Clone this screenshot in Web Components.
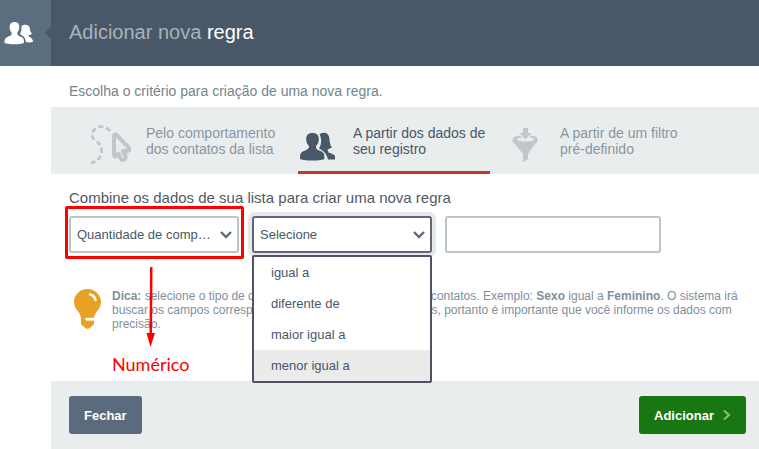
<!DOCTYPE html>
<html lang="pt-BR">
<head>
<meta charset="utf-8">
<title>Adicionar nova regra</title>
<style>
body { margin: 0; background: #fff; font-family: "Liberation Sans", Arial, sans-serif; color: #485868; }
</style>
</head>
<body>
<rule-dialog></rule-dialog>

<template id="t-dialog">
<style>
:host { display: flex; flex-direction: column; min-height: 100vh; }
.content { flex: 1; margin-left: 51px; display: flex; flex-direction: column; }
.intro { margin: 0; padding: 16px 18px 7px; font-size: 14px; line-height: 18px; color: #75848a; }
nav { display: flex; gap: 15px; padding-left: 40px; background: #e9edee; }
.grow { flex: 1; }
strong { color: #80909c; }
</style>
<page-header>Adicionar nova <b slot="em">regra</b></page-header>
<div class="content">
  <p class="intro">Escolha o critério para criação de uma nova regra.</p>
  <nav>
    <criteria-tab icon="path">Pelo comportamento<br>dos contatos da lista</criteria-tab>
    <criteria-tab icon="people" active>A partir dos dados de<br>seu registro</criteria-tab>
    <criteria-tab icon="funnel">A partir de um filtro<br>pré-definido</criteria-tab>
  </nav>
  <rule-form></rule-form>
  <tip-box><strong>Dica:</strong> selecione o tipo de dado desejado para agrupar seus contatos. Exemplo: <strong>Sexo</strong> igual a <strong>Feminino</strong>. O sistema irá buscar os campos correspondentes nos cadastros existentes, portanto é importante que você informe os dados com precisão.</tip-box>
  <div class="grow"></div>
  <action-bar></action-bar>
</div>
</template>

<template id="t-header">
<style>
:host { display: flex; height: 66px; background: #485868; }
.side { position: relative; width: 51px; background: #5b6e7f; display: flex; align-items: center; }
.side svg { margin-left: 4px; }
.notch { position: absolute; right: 0; top: 27px; border: 6px solid transparent; border-left-width: 0; border-right-color: #485868; }
h1 { margin: 0; padding-left: 18px; font-size: 20px; font-weight: 400; line-height: 64px; color: #a9b2b8; }
::slotted(b) { font-weight: 400; color: #fff; }
</style>
<div class="side">
  <svg width="30" height="24" viewBox="0 0 30 24" fill="#fff" aria-hidden="true">
    <path d="M10.500 1C14 1 15.600 3.400 15.300 6.500C15.100 9 14.200 10.500 13.300 11.500C13 14.500 15 15 17.500 16C19.500 17 20 18.500 20 22C15 23.800 6 23.800 .5 22C.5 18 1 17 4 15.700C6.500 14.700 8 14.500 7.600 11.500C6.500 10.500 5.800 9 5.700 6.500C5.400 3.400 7 1 10.500 1Z"/>
    <path d="M17.500 5C21 2.600 25.800 4.200 26 8C26 10.500 27 11.500 28 12.800C27 14 25 14 24.300 14.300C24.300 16 29 16.500 29 21C26.500 21.500 24 21.500 21.800 21C21.500 16 19 15 16 13.300C16.800 11 17.900 8 17.500 5Z"/>
  </svg>
  <span class="notch"></span>
</div>
<h1><slot></slot><slot name="em"></slot></h1>
</template>

<template id="t-tab">
<style>
:host { display: block; width: 192px; }
a { display: flex; box-sizing: border-box; height: 67px; padding-top: 18px; text-decoration: none; color: #8996a1; font-size: 14px; line-height: 16px; border-bottom: 3px solid transparent; }
:host([active]) a { color: #485868; border-bottom-color: #c53822; }
.icon { width: 55px; flex: none; color: #bfc6cc; }
:host([active]) .icon { color: #485868; }
svg { display: block; }
span { white-space: nowrap; }
</style>
<a href="#"><div class="icon"></div><span><slot></slot></span></a>
</template>

<template id="t-form">
<style>
:host { display: block; padding: 14px 18px 0; }
h2 { margin: 0 0 8px; font-size: 15px; line-height: 20px; font-weight: 400; color: #505a66; }
.row { display: flex; gap: 13px; }
.f1 { position: relative; width: 170px; }
.f2 { position: relative; width: 180px; }
.f3 { flex: 0 1 216px; min-width: 60px; }
select, input { box-sizing: border-box; display: block; width: 100%; height: 37px; border: 2px solid #bcc4ca; border-radius: 3px; background: #fff; font: 13px "Liberation Sans", Arial, sans-serif; color: #485868; outline: none; margin: 0; padding: 0 6px; appearance: none; }
.f2 select { border-color: #666475; box-shadow: 0 0 0 4px #e4e8ef; }
.chev { position: absolute; right: 7px; top: 14px; pointer-events: none; }
ul { position: absolute; z-index: 2; box-sizing: border-box; top: 39px; left: 0; width: 100%; margin: 0; padding: 0; list-style: none; background: #fff; border: 2px solid #535061; border-radius: 2px; font-size: 13px; line-height: 31px; color: #485868; }
li { padding-left: 17px; }
li[aria-selected="true"] { background: #ebebeb; }
.mark { position: absolute; z-index: 1; left: -4px; top: -10px; right: -5px; bottom: -6px; border: 3px solid #fe0000; border-radius: 2px; pointer-events: none; }
.arrow { position: absolute; z-index: 1; left: 77px; top: 51px; pointer-events: none; }
.note { position: absolute; z-index: 1; left: 43px; top: 136px; font: 18px/24px Lato, "Open Sans", sans-serif; color: #fe0000; }
</style>
<h2>Combine os dados de sua lista para criar uma nova regra</h2>
<div class="row">
  <div class="f1">
    <select aria-label="Campo"><option>Quantidade de comp…</option></select>
    <svg class="chev" width="12" height="10" viewBox="0 0 12 10" fill="none" stroke="#5b6b80" stroke-width="2.400" aria-hidden="true"><path d="M1 2L6 7L11 2"/></svg>
    <div class="mark"></div>
    <svg class="arrow" width="10" height="80" viewBox="0 0 10 80" fill="#fe0000" aria-hidden="true"><path d="M4 0H6.500L6 66H9L4.500 80L.5 66H3.500Z"/></svg>
    <div class="note">Numérico</div>
  </div>
  <div class="f2">
    <select aria-label="Operador"><option>Selecione</option></select>
    <svg class="chev" width="12" height="10" viewBox="0 0 12 10" fill="none" stroke="#5b6b80" stroke-width="2.400" aria-hidden="true"><path d="M1 2L6 7L11 2"/></svg>
    <ul role="listbox" aria-label="Operador">
      <li role="option">igual a</li>
      <li role="option">diferente de</li>
      <li role="option">maior igual a</li>
      <li role="option" aria-selected="true">menor igual a</li>
    </ul>
  </div>
  <div class="f3"><input type="text" aria-label="Valor"></div>
</div>
</template>

<template id="t-tip">
<style>
:host { display: flex; gap: 11px; padding: 36px 16px 0 23px; font-size: 12px; line-height: 14px; color: #80909c; }
svg { flex: none; }
p { margin: 0; }
</style>
<svg width="27" height="40" viewBox="0 0 27 40" aria-hidden="true">
  <path fill="#e8a025" d="M13.500 0C21 0 27 5.600 27 13C27 17.500 25 20 22.500 23C21 25 20.500 27 20 29H7C6.500 27 6 25 4.500 23C2 20 0 17.500 0 13C0 5.600 6 0 13.500 0ZM7 28H12V31.500H20V34.500Q20 36 18 37Q15.500 40 13.500 40Q11.500 40 9 37Q7 36 7 34.500Z"/>
  <path fill="none" stroke="#fff" stroke-width="2.600" stroke-linecap="round" d="M16 5.500Q20.500 6.500 21.500 11M12.500 30H20"/>
</svg>
<p><slot></slot></p>
</template>

<template id="t-bar">
<style>
:host { display: flex; justify-content: space-between; padding: 15px 13px 15px 18px; background: #e9edee; }
button { height: 38px; border: 0; border-radius: 3px; padding: 0 15px; font: bold 13px "Liberation Sans", Arial, sans-serif; color: #fff; background: #5b6a7c; display: flex; align-items: center; gap: 9px; }
.ok { background: #187713; }
</style>
<button type="button">Fechar</button>
<button type="button" class="ok">Adicionar<svg width="8" height="12" viewBox="0 0 8 12" fill="none" stroke="#8cbb89" stroke-width="2" aria-hidden="true"><path d="M1 1.500L6 6L1 10.500"/></svg></button>
</template>

<script>
const icons = {
  path: `<svg width="40" height="40" viewBox="0 0 40 40" fill="none" stroke="currentColor" aria-hidden="true">
    <path stroke-width="2.800" stroke-dasharray="5 3" d="M19 6C15 1 8 0 4 4C0 8 0 12 4 15C8 18 11 21 10.500 27C10 33 6 37 0 38"/>
    <path stroke-width="4" stroke-linejoin="round" d="M23 11Q23 8 25.500 10L38 23Q39.500 26 36 26H32L34.500 31Q35 35 32 35Q30 35.500 29 32L27.500 28.500L25.500 31Q23 33 23 29.500Z"/></svg>`,
  people: `<svg width="37" height="40" viewBox="0 0 37 40" fill="currentColor" aria-hidden="true">
    <path d="M14.500 8C19 8 21 10.500 20.800 14.500C20.700 18 19.500 19.500 18 21C18 24.500 19 24.500 22.500 26C26 27.500 26.500 29 26.500 34C21 36 8 36 2 34C2 29 2.500 27.500 6 26C9.500 24.500 11 24 11 21C9.500 19.500 8.300 18 8.200 14.500C8 10.500 10 8 14.500 8Z"/>
    <path d="M21.500 9Q29 5.500 31 11.500C32 16 31.500 19.500 34 22.500L29.500 24.500L30.500 27.500Q36 29 37 31V34.500H30C28.500 29 26.500 26.500 21 23.500C23.500 20 24 14 21.500 9Z"/></svg>`,
  funnel: `<svg width="40" height="40" viewBox="0 0 40 40" fill="currentColor" aria-hidden="true">
    <path d="M18 3H23V8H26.500L20.500 14.500L14.500 8H18Z"/>
    <path fill-rule="evenodd" d="M15 10.500C6 11 6 17.500 10 19L18 29V37Q20 37 23 34V29L30 19C34.500 17 34 11 26 10.500L24.500 12.500Q29 13 29.500 14.500C27 17 14 17 11.500 14.500Q12 13 17 12.500Z"/></svg>`
};
const define = (name, templateId, init) => {
  customElements.define(name, class extends HTMLElement {
    constructor() {
      super();
      this.attachShadow({ mode: "open" }).append(document.getElementById(templateId).content.cloneNode(true));
    }
    connectedCallback() { if (init) init(this); }
  });
};
define("page-header", "t-header");
define("criteria-tab", "t-tab", el => {
  el.shadowRoot.querySelector(".icon").innerHTML = icons[el.getAttribute("icon")];
});
define("rule-form", "t-form");
define("tip-box", "t-tip");
define("action-bar", "t-bar");
define("rule-dialog", "t-dialog");
</script>
</body>
</html>
